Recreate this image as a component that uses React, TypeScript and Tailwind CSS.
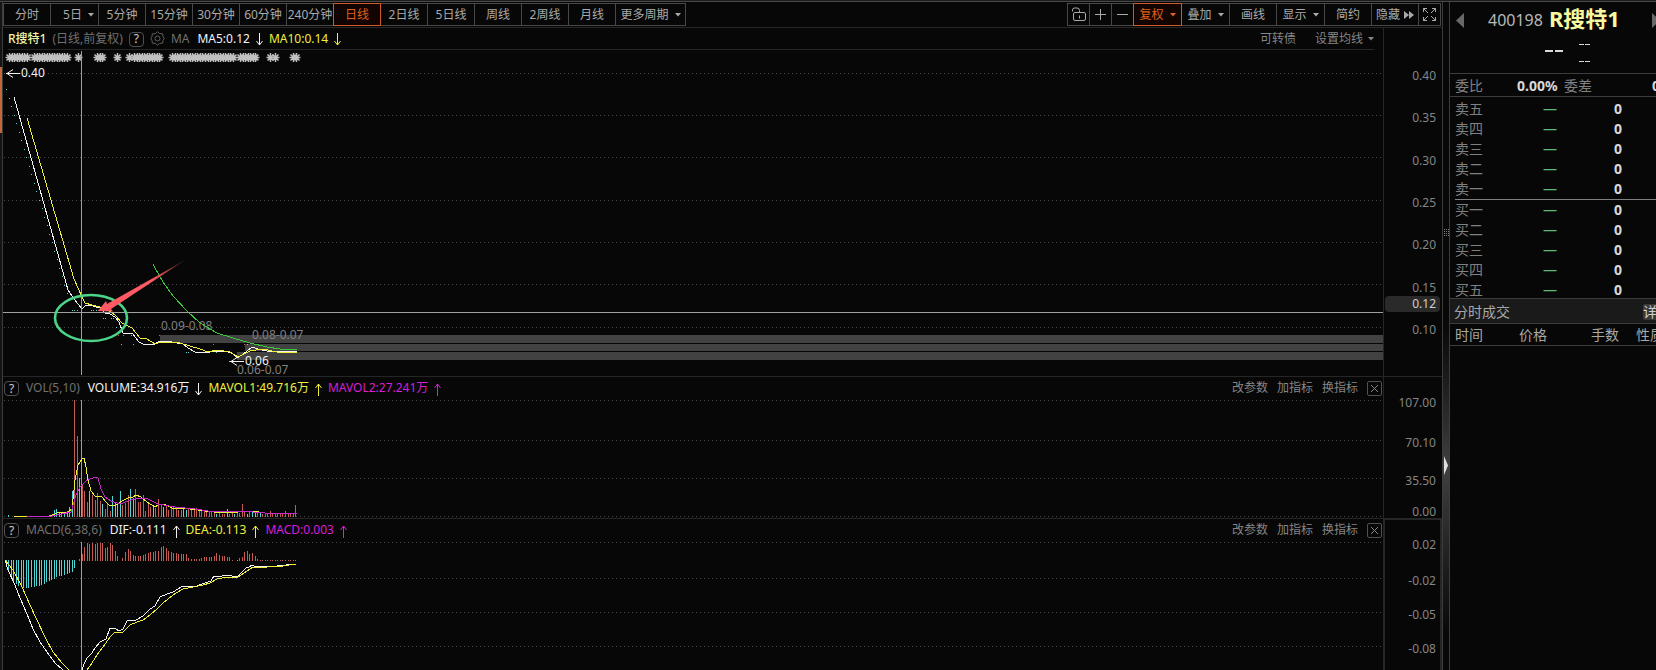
import type { ReactNode } from "react";

const SLOT = 2.54;
const slotX = (i: number) => Math.round(5.6 + i * SLOT);

const UP = "#c85a54";
const DOWN = "#4fd6d6";
const WHITE = "#f2f2f2";
const YELLOW = "#f0f03c";
const MAGENTA = "#c828c8";

const periods = ["分时", "5日", "5分钟", "15分钟", "30分钟", "60分钟", "240分钟", "日线", "2日线", "5日线", "周线", "2周线", "月线"];

const starRuns = [
  [9, 27], [34, 69], [78, 78], [97, 103], [117, 117], [129, 129], [134, 160],
  [172, 233], [240, 256], [270, 270], [275, 275], [293, 296],
];

const ma5 =
  "14,97 68,290 74,299 82,309 86,305 93,306 100,308 105,313 110,314 115,317 119,322 123,333 133,334 139,342 143,344 155,344 160,341 168,341 172,342 183,344 188,348 195,352 210,352 215,351 225,351 232,353 237,358 242,355 252,347 258,349 267,351 297,352";
const ma10 =
  "27,118 74,279 82,297 85,303 92,305 107,309 115,315 122,323 132,328 140,338 147,339 155,344 161,342 180,343 190,346 200,349 208,352 217,350 230,352 238,357 250,351 263,349 277,352 297,352";
const ma60 =
  "153,264 155,268 163,282 173,296 187,311 200,323 217,333 233,338 250,343 267,347 280,349 297,349";

// [x, y, rising]
const priceDots: [number, number, boolean][] = [
  [72, 310, false], [74, 310, false], [77, 310, false], [91, 310, false], [93, 310, false], [96, 310, false],
  [98, 310, true], [103, 318, false], [105, 318, false], [111, 318, false], [113, 318, false], [116, 327, false],
  [118, 335, true], [121, 344, false], [123, 335, true], [131, 335, false], [133, 344, false], [159, 335, true],
  [186, 352, false], [188, 352, false], [213, 344, true], [216, 352, false], [229, 361, false], [231, 361, false],
  [244, 344, true], [247, 344, false], [254, 344, true], [257, 344, false],
];

// bar heights, negative for a falling day
const volumes = [
  0, -2, 0, 0, 0, 0, 0, 0, 0, 0, 0, 0, 0, 0, 0, 0, 0, -2, 2, -7, -8, -4, -4, -4, -6, -10, -26, 117, 81, -39,
  32, 26, 15, -26, 22, 17, 24, 16, -13, 8, 13, 6, -21, -14, -14, -26, 12, 14, 22, -28, -19, 28, 15, 15, 22,
  6, 15, 10, -12, 9, 18, 13, -10, 11, 7, 9, 10, 9, 7, 7, -8, -7, 8, 7, 7, 9, 8, 7, 7, 6, 6, 5, 4, -3, 5, 3,
  3, -8, 3, 4, -3, 4, 4, 13, 6, -3, 6, -5, -6, 5, -4, 3, 4, 3, 6, 4, 3, 3, 4, 3, 6, 4, 3, 4, 12,
];

const mavol1 =
  "14,516 50,516 57,513 68,512 72,509 75,480 78,465 82,459 84,458 86,467 88,480 91,491 95,496 102,497 106,502 110,506 116,505 122,501 128,498 133,497 136,495 141,497 147,502 155,507 160,504 166,505 172,508 190,509 205,511 222,513 238,512 252,511 265,513 295,513";
const mavol2 =
  "27,516 52,516 62,514 71,512 76,495 80,487 86,481 90,479 96,477 98,478 101,489 105,497 111,501 120,504 128,501 138,498 148,499 158,504 175,507 195,509 215,512 240,511 265,513 297,513";

const macdBars = [
  -5, -11, -17, -21, -24, -26, -27, -28, -28, -28, -27, -27, -26, -26, -25, -24, -22, -21, -20, -19, -17, -16,
  -16, -15, -14, -13, -12, -8, 0, 2, 7, 14, 18, 17, 18, 17, 18, 18, 18, 13, 14, 18, 16, 10, 5, 0, 3, 9, 12, 10,
  6, 5, 5, 5, 6, 7, 8, 9, 9, 10, 10, 14, 15, 13, 10, 9, 8, 8, 7, 7, 7, 7, 3, 2, 2, 2, 2, 3, 4, 4, 4, 4, 5,
  8, 6, 5, 5, 4, 4, 1, 0, -1, 3, 4, 9, 10, 7, 8, 5, 2, 1, 1, 1, 1, 1, 1, 1, 1, 1, 1, 1, 1, 1, 1, 1,
];

const dif =
  "5,560 8,570 15,585 20,598 27,614 33,629 40,642 47,652 55,663 63,670 75,680 82,670 84,664 87,658 92,653 95,648 100,642 106,639 110,628 115,628 119,631 123,629 127,621 136,620 143,616 150,609 155,606 160,597 167,594 173,592 183,586 187,587 197,586 202,584 211,581 214,576 222,576 227,575 237,577 242,572 247,567 249,567 252,565 256,567 277,566 296,564";
const dea =
  "5,560 13,570 22,587 30,605 37,620 45,637 53,652 62,663 69,670 80,678 87,670 92,663 97,655 103,647 110,637 115,632 123,632 130,625 137,622 143,620 150,615 157,609 163,603 173,595 183,589 193,587 203,585 210,583 217,579 227,577 238,577 247,571 253,567 267,567 283,566 296,564";

function Caret() {
  return (
    <svg width="6" height="4" viewBox="0 0 6 4" fill="currentColor" className="shrink-0" aria-hidden="true">
      <path d="M0 0h6L3 3.5z" />
    </svg>
  );
}

function TrendArrow({ up }: { up?: boolean }) {
  return (
    <svg width="7" height="13" viewBox="0 0 7 13" fill="none" stroke="currentColor" className="mt-0.5 shrink-0" aria-hidden="true">
      {up ? <path d="M3.5 13V1M0.5 5L3.5 1L6.5 5" /> : <path d="M3.5 0v12M0.5 8L3.5 12L6.5 8" />}
    </svg>
  );
}

function Reading({ color, up, children }: { color: string; up?: boolean; children: ReactNode }) {
  return (
    <span className={`flex items-center gap-1.5 ${color}`}>
      {children}
      <TrendArrow up={up} />
    </span>
  );
}

function ToolButton({ active, width = "w-12", label, children }: { active?: boolean; width?: string; label?: string; children: ReactNode }) {
  return (
    <button
      aria-label={label}
      className={`-ml-px flex h-[23px] shrink-0 items-center justify-center gap-1.5 whitespace-nowrap border ${width} ${
        active ? "relative z-10 border-[#cc5a2c] bg-[#120400] text-[#e0601c]" : "border-[#484848] text-[#aaaaaa]"
      }`}
    >
      {children}
    </button>
  );
}

function HelpButton() {
  return (
    <button aria-label="帮助" className="mt-px flex size-[15px] shrink-0 items-center justify-center rounded-sm border border-[#505050] leading-3 text-[#d0d0d0]">
      ?
    </button>
  );
}

function GridLines({ rows }: { rows: number[] }) {
  return (
    <g stroke="#484848" strokeDasharray="1 3" shapeRendering="crispEdges">
      {rows.map((y) => (
        <line key={y} x1="1" x2="100%" y1={y + 0.5} y2={y + 0.5} />
      ))}
    </g>
  );
}

function Line({ points, color }: { points: string; color: string }) {
  return <polyline points={points} fill="none" stroke={color} shapeRendering="crispEdges" />;
}

function IndicatorHeader({ name, children }: { name: string; children: ReactNode }) {
  return (
    <div className="flex h-[22px] items-center justify-between px-px">
      <div className="flex items-center gap-1.5">
        <HelpButton />
        <span className="ml-px mr-0.5 text-[#707070]">{name}</span>
        {children}
      </div>
      <div className="flex items-center gap-[9px] text-[#858585]">
        <button>改参数</button>
        <button>加指标</button>
        <button>换指标</button>
        <button aria-label="关闭" className="flex size-[15px] items-center justify-center rounded-xs border border-[#505050]">
          <svg width="9" height="9" viewBox="0 0 9 9" stroke="currentColor">
            <path d="M1 1l7 7M8 1L1 8" />
          </svg>
        </button>
      </div>
    </div>
  );
}

function PriceChart() {
  return (
    <svg className="block h-[326px] w-full" role="img" aria-label="日线">
      <GridLines rows={[23, 65, 107, 150, 192, 234, 277]} />
      <g fill="#424242">
        <rect x="157" y="285" width="100%" height="8" />
        <rect x="242" y="294" width="100%" height="7" />
        <rect x="234" y="302" width="100%" height="8" />
      </g>
      <g transform="translate(-3 -50)">
        <g stroke="#c0c0c0" strokeWidth="1.5">
          {starRuns.flatMap(([from, to]) => {
            const xs: number[] = [];
            for (let x = from; x <= to; x += SLOT) xs.push(Math.round(x));
            return xs.map((x) => (
              <path key={x} d={`M${x + 0.5} 53v9M${x - 3.5} 57.5h8M${x - 2.5} 54.5l6 6M${x + 3.5} 54.5l-6 6`} />
            ));
          })}
        </g>
        <g shapeRendering="crispEdges">
          {Array.from({ length: 25 }, (_, i) => (
            <rect key={i} x={6 + Math.round(i * SLOT)} y={Math.round(89 + i * 8.5)} width="1" height="1" fill={DOWN} />
          ))}
          {priceDots.map(([x, y, up]) => (
            <rect key={`${x}-${y}`} x={x} y={y} width="1" height="1" fill={up ? UP : DOWN} />
          ))}
        </g>
        <g fontSize="12" fill="#808080">
          <text x="161" y="330">0.09-0.08</text>
          <text x="252" y="339">0.08-0.07</text>
          <text x="237" y="374">0.06-0.07</text>
        </g>
        <g fontSize="12" fill={WHITE}>
          <text x="21" y="77">0.40</text>
          <text x="245" y="365">0.06</text>
        </g>
        <path d="M6 73.5h14M13 69.5l-6 4l6 4M230 361.5h14M237 357.5l-6 4l6 4" fill="none" stroke={WHITE} />
        <Line points={ma60} color="#3cc83c" />
        <Line points={ma5} color={WHITE} />
        <Line points={ma10} color={YELLOW} />
      </g>
      <g stroke="#a0a0a0" shapeRendering="crispEdges">
        <line x1="0" x2="100%" y1="262.5" y2="262.5" />
        <line x1="78.5" x2="78.5" y1="1" y2="325" />
      </g>
      <g transform="translate(-3 -50)">
        <defs>
          <linearGradient id="arrow" x1="0" x2="1" y1="1" y2="0">
            <stop offset="0.6" stopColor="#ff5a64" />
            <stop offset="1" stopColor="#ff5a64" stopOpacity="0.2" />
          </linearGradient>
        </defs>
        <ellipse cx="91" cy="318" rx="36" ry="23" fill="none" stroke="#4cd488" strokeWidth="2.6" />
        <path d="M98 311l8-10l1 3L186 259.5L111 309l2 2.500z" fill="url(#arrow)" />
      </g>
    </svg>
  );
}

function VolumeChart() {
  return (
    <svg className="block h-[119px] w-full" role="img" aria-label="VOL">
      <GridLines rows={[1, 41, 79, 117]} />
      <g transform="translate(-3 -399)">
        <g shapeRendering="crispEdges">
          {volumes.map((v, i) => (
            <rect key={i} x={slotX(i)} y={517 - Math.abs(v)} width="1" height={Math.abs(v)} fill={v > 0 ? UP : DOWN} />
          ))}
          <rect x="81" y="400" width="1" height="117" fill="#a0a0a0" />
        </g>
        <Line points={mavol1} color={YELLOW} />
        <Line points={mavol2} color={MAGENTA} />
      </g>
    </svg>
  );
}

function MacdChart() {
  return (
    <svg className="block h-[129px] w-full" role="img" aria-label="MACD">
      <GridLines rows={[1, 37, 71, 105]} />
      <g transform="translate(-3 -541)">
        <g shapeRendering="crispEdges">
          {macdBars.map((v, i) => (
            <rect key={i} x={slotX(i)} y={v > 0 ? 561 - v : 560} width="1" height={Math.abs(v)} fill={v > 0 ? UP : DOWN} />
          ))}
          <rect x="81" y="542" width="1" height="128" fill="#a0a0a0" />
        </g>
        <Line points={dif} color={WHITE} />
        <Line points={dea} color={YELLOW} />
      </g>
    </svg>
  );
}

function Toolbar() {
  return (
    <div className="flex h-[26px] items-start justify-between border-b border-[#262626] px-px pt-px">
      <div className="flex">
        {periods.map((p) =>
          p === "5日" ? (
            <ToolButton key={p} width="w-[49px] pl-2">
              {p}
              <Caret />
            </ToolButton>
          ) : (
            <ToolButton key={p} active={p === "日线"}>{p}</ToolButton>
          )
        )}
        <ToolButton width="w-[71px]">
          更多周期
          <Caret />
        </ToolButton>
      </div>
      <div className="flex">
        <ToolButton width="w-[23px]" label="锁定">
          <svg width="15" height="15" viewBox="0 0 15 15" fill="none" stroke="currentColor" className="shrink-0">
            <rect x="2.5" y="5.5" width="12" height="8" rx="1.5" />
            <path d="M1.5 4.5V3A2 2 0 013.5 1h2.5A2.5 2.5 0 018.5 3.5v2M8.5 8.500v3" />
          </svg>
        </ToolButton>
        <ToolButton width="w-[23px]" label="放大">
          <svg width="11" height="11" viewBox="0 0 11 11" stroke="currentColor" className="shrink-0">
            <path d="M5.5 0v11M0 5.5h11" />
          </svg>
        </ToolButton>
        <ToolButton width="w-[23px]" label="缩小">
          <svg width="11" height="11" viewBox="0 0 11 11" stroke="currentColor" className="shrink-0">
            <path d="M0 5.5h11" />
          </svg>
        </ToolButton>
        <ToolButton active width="w-[49px]">复权<Caret /></ToolButton>
        <ToolButton width="w-[49px]">叠加<Caret /></ToolButton>
        <ToolButton>画线</ToolButton>
        <ToolButton width="w-[49px]">显示<Caret /></ToolButton>
        <ToolButton>简约</ToolButton>
        <ToolButton>
          <span className="-mr-0.5">隐藏</span>
          <svg width="10" height="8" viewBox="0 0 10 8" fill="currentColor" className="shrink-0">
            <path d="M0 0l5 4l-5 4zM5 0l5 4l-5 4z" />
          </svg>
        </ToolButton>
        <ToolButton width="w-[23px]" label="全屏">
          <svg width="13" height="13" viewBox="0 0 13 13" fill="none" stroke="currentColor" className="shrink-0">
            <path d="M0.5 4V0.5H4M0.5 0.5L5 5M9 0.5h3.5V4M12.5 0.5L8 5M0.5 9v3.5H4M0.5 12.5L5 8M12.5 9v3.5H9M12.5 12.5L8 8" />
          </svg>
        </ToolButton>
      </div>
    </div>
  );
}

function PricePanel() {
  return (
    <section className="flex">
      <div className="min-w-0 flex-1">
        <div className="ml-[5px] mr-[9px] flex h-[22px] items-center justify-between border-b border-[#262626]">
          <div className="flex items-center gap-1.5">
            <span className="font-medium text-[#f4f4a4]">R搜特1</span>
            <span className="text-[#707070]">(日线,前复权)</span>
            <HelpButton />
            <button aria-label="设置" className="text-[#606060]">
              <svg width="15" height="15" viewBox="0 0 15 15" fill="none" stroke="currentColor">
                <path d="M7.5 0.8L9.7 2.6L12.7 2.9L13 5.5L14.2 7.5L13 9.5L12.7 12.1L9.7 12.4L7.5 14.2L5.3 12.4L2.3 12.1L2 9.5L0.8 7.5L2 5.5L2.3 2.9L5.3 2.6z" />
                <circle cx="7.5" cy="7.5" r="2.5" />
              </svg>
            </button>
            <span className="mr-0.5 text-[#707070]">MA</span>
            <Reading color="text-[#f2f2f2]">MA5:0.12</Reading>
            <Reading color="text-[#f0f03c]">MA10:0.14</Reading>
          </div>
          <div className="flex items-center gap-[19px] text-[#858585]">
            <button>可转债</button>
            <button className="flex items-center gap-[5px]">设置均线<Caret /></button>
          </div>
        </div>
        <PriceChart />
      </div>
      <div className="relative w-[59px] shrink-0 border-l border-[#262626] pr-1.5 pt-[38px] text-right text-[#858585]">
        <div className="flex h-[274px] flex-col justify-between leading-5">
          {["0.40", "0.35", "0.30", "0.25", "0.20", "0.15", "0.10"].map((v) => (
            <span key={v}>{v}</span>
          ))}
        </div>
        <span className="absolute left-px right-0.5 top-[268px] rounded-sm bg-[#2a2a2a] pr-1 leading-4 text-[#d0d0d0]">0.12</span>
      </div>
    </section>
  );
}

function VolumePanel() {
  return (
    <section className="flex border-t border-[#262626]">
      <div className="min-w-0 flex-1">
        <IndicatorHeader name="VOL(5,10)">
          <Reading color="text-[#f2f2f2]">VOLUME:34.916万</Reading>
          <Reading color="text-[#f0f03c]" up>MAVOL1:49.716万</Reading>
          <Reading color="text-[#d81ed8]" up>MAVOL2:27.241万</Reading>
        </IndicatorHeader>
        <VolumeChart />
      </div>
      <div className="grid w-[59px] shrink-0 grid-rows-[40px_38px_31px_16px] border-l border-[#262626] pr-1.5 pt-4 text-right leading-5 text-[#858585]">
        <span>107.00</span>
        <span>70.10</span>
        <span>35.50</span>
        <span>0.00</span>
      </div>
    </section>
  );
}

function MacdPanel() {
  return (
    <section className="flex flex-1 border-t border-[#262626]">
      <div className="min-w-0 flex-1">
        <IndicatorHeader name="MACD(6,38,6)">
          <Reading color="text-[#f2f2f2]" up>DIF:-0.111</Reading>
          <Reading color="text-[#f0f03c]" up>DEA:-0.113</Reading>
          <Reading color="text-[#d81ed8]" up>MACD:0.003</Reading>
        </IndicatorHeader>
        <MacdChart />
      </div>
      <div className="grid w-[59px] shrink-0 grid-rows-[36px_34px_34px_20px] border-x-2 border-t border-[#262626] pr-1 pt-[15px] text-right leading-5 text-[#858585]">
        <span>0.02</span>
        <span>-0.02</span>
        <span>-0.05</span>
        <span>-0.08</span>
      </div>
    </section>
  );
}

function Splitter() {
  return (
    <div className="flex w-[8px] shrink-0 flex-col items-center border-x border-[#3c3c3c] bg-linear-to-b from-[#080808] from-48% via-[#404040] via-70% to-[#080808] to-95%">
      <svg width="5" height="8" viewBox="0 0 5 8" fill="#808080" className="mt-[227px] shrink-0">
        <path d="M0 0h1v1h-1zM2 0h1v1h-1zM4 0h1v1h-1zM0 2h1v1h-1zM2 2h1v1h-1zM4 2h1v1h-1zM0 4h1v1h-1zM2 4h1v1h-1zM4 4h1v1h-1zM0 6h1v1h-1zM2 6h1v1h-1zM4 6h1v1h-1z" />
      </svg>
      <svg width="4" height="19" viewBox="0 0 4 19" fill="#e0e0e0" className="mt-[219px] shrink-0">
        <path d="M0 0l4 9.500L0 19z" />
      </svg>
    </div>
  );
}

function BookRows({ side }: { side: string }) {
  const levels = side === "卖" ? ["五", "四", "三", "二", "一"] : ["一", "二", "三", "四", "五"];
  return (
    <>
      {levels.map((n) => (
        <tr key={n} className="h-5">
          <th scope="row" className="p-0 text-left font-normal text-[#808080]">{side}{n}</th>
          <td className="p-0 text-right text-[#5cb878]">—</td>
          <td className="p-0 text-right font-bold text-[#d8d8d8]">0</td>
          <td className="p-0" />
        </tr>
      ))}
    </>
  );
}

function QuotePanel() {
  return (
    <aside className="w-[206px] shrink-0 overflow-hidden text-sm leading-5">
      <div className="h-[72px] border-b border-[#3c3c3c]">
        <div className="flex h-9 w-[210px] items-center pl-1.5">
          <button aria-label="上一只" className="text-[#686868]">
            <svg width="8" height="15" viewBox="0 0 8 15" fill="currentColor"><path d="M8 0v15L0 7.5z" /></svg>
          </button>
          <h1 className="mb-1 ml-6 flex items-center gap-1.5">
            <span className="mt-1 text-base leading-5 text-[#b8b8b8]">400198</span>
            <span className="text-[22px] leading-6 font-bold text-[#f8f8a0]">R搜特1</span>
          </h1>
          <button aria-label="下一只" className="ml-auto text-[#686868]">
            <svg width="8" height="15" viewBox="0 0 8 15" fill="currentColor"><path d="M0 0v15L8 7.5z" /></svg>
          </button>
        </div>
        <div className="flex items-start gap-4 pl-[95px] text-[#d8d8d8]">
          <svg width="18" height="22" viewBox="0 0 18 22" stroke="currentColor" strokeWidth="2"><path d="M0 13h8M10 13h8" /></svg>
          <svg width="11" height="28" viewBox="0 0 11 28" stroke="currentColor"><path d="M0 6.500h5M6 6.500h5M0 23.500h5M6 23.500h5" /></svg>
        </div>
      </div>
      <div className="flex h-[23px] items-center border-b border-[#3c3c3c] pl-[5px] pt-0.5 text-[#808080]">
        <span className="w-[62px] shrink-0">委比</span>
        <span className="w-[47px] shrink-0 font-bold text-[#d8d8d8]">0.00%</span>
        <span className="w-[88px] shrink-0">委差</span>
        <span className="font-bold text-[#d8d8d8]">0</span>
      </div>
      <div className="h-[201px] overflow-hidden pl-[5px] pt-0.5">
        <table className="w-full table-fixed border-collapse">
          <colgroup>
            <col className="w-[50px]" />
            <col className="w-[52px]" />
            <col className="w-[65px]" />
            <col />
          </colgroup>
          <tbody className="border-b border-[#808080]">
            <BookRows side="卖" />
          </tbody>
          <tbody>
            <BookRows side="买" />
          </tbody>
        </table>
      </div>
      <div className="flex h-[26px] items-center border-y border-[#3c3c3c] bg-[#1a1a1a] pl-1 pt-0.5 text-[#a8a8a8]">
        <h2 className="w-[189px] shrink-0">分时成交</h2>
        <button className="shrink-0 rounded-xs bg-[#383838] leading-4 text-[#d0d0d0]">详细</button>
      </div>
      <table className="w-[216px] table-fixed border-collapse border-b border-[#3c3c3c] text-[#a8a8a8]">
        <thead>
          <tr className="h-[21px] text-left">
            <th className="w-[69px] p-0 pl-[5px] pt-px font-normal">时间</th>
            <th className="w-[72px] p-0 pt-px font-normal">价格</th>
            <th className="w-[45px] p-0 pt-px font-normal">手数</th>
            <th className="p-0 pt-px font-normal">性质</th>
          </tr>
        </thead>
      </table>
    </aside>
  );
}

export default function App() {
  return (
    <div className="flex min-h-screen flex-col overflow-hidden bg-[#070707] font-['Noto_Sans','Noto_Sans_CJK_SC',sans-serif] text-xs">
      <div className="h-0.5 shrink-0 border-b border-[#484848] bg-[#1c1c1c]" />
      <div className="flex flex-1">
        <div className="w-[3px] shrink-0 border-r border-[#3c3c3c] bg-[#141414] pt-[65px]">
          <div className="h-[66px] bg-[#c4683c]" />
        </div>
        <main className="flex min-w-0 flex-1 flex-col">
          <Toolbar />
          <PricePanel />
          <VolumePanel />
          <MacdPanel />
        </main>
        <Splitter />
        <QuotePanel />
      </div>
    </div>
  );
}
